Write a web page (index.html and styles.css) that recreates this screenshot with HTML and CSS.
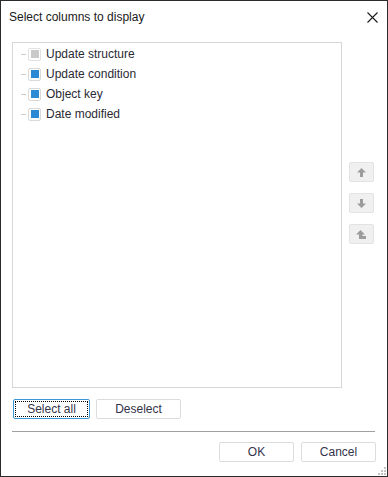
FILE: index.html
```html
<!DOCTYPE html>
<html lang="en">
<head>
    <meta charset="UTF-8">
    <title>Select columns to display</title>
    <link rel="stylesheet" href="styles.css">
</head>
<body>
    <div class="dialog">
        <!-- Title bar -->
        <div class="dialog-title">
            <span class="dialog-title-text">Select columns to display</span>
            <span class="dialog-close">
                <svg width="11" height="11" viewBox="0 0 11 11">
                    <path d="M0.5 0.5 L10.5 10.5 M10.5 0.5 L0.5 10.5" stroke="#1a1a1a" stroke-width="1.1" fill="none"/>
                </svg>
            </span>
        </div>

        <div class="dialog-body">
            <div class="column-list">
                <div class="column-item">
                    <span class="tree-dash"></span>
                    <span class="check disabled"><span class="check-mark"></span></span>
                    <span class="column-label">Update structure</span>
                </div>
                <div class="column-item">
                    <span class="tree-dash"></span>
                    <span class="check"><span class="check-mark"></span></span>
                    <span class="column-label">Update condition</span>
                </div>
                <div class="column-item">
                    <span class="tree-dash"></span>
                    <span class="check"><span class="check-mark"></span></span>
                    <span class="column-label">Object key</span>
                </div>
                <div class="column-item">
                    <span class="tree-dash"></span>
                    <span class="check"><span class="check-mark"></span></span>
                    <span class="column-label">Date modified</span>
                </div>
            </div>

            <div class="move-buttons">
                <span class="move-btn">
                    <svg width="9" height="9" viewBox="0 0 9 9">
                        <path d="M4.5 0 L9 4.5 L6 4.5 L6 9 L3 9 L3 4.5 L0 4.5 Z" fill="#9c9c9c"/>
                    </svg>
                </span>
                <span class="move-btn">
                    <svg width="9" height="9" viewBox="0 0 9 9">
                        <path d="M4.5 9 L9 4.5 L6 4.5 L6 0 L3 0 L3 4.5 L0 4.5 Z" fill="#9c9c9c"/>
                    </svg>
                </span>
                <span class="move-btn">
                    <svg width="11" height="9" viewBox="0 0 11 9">
                        <path d="M4.5 0 L9 4.5 L6.5 4.5 L6.5 6 L10 6 L10 9 L3 9 L3 4.5 L0 4.5 Z" fill="#9c9c9c"/>
                    </svg>
                </span>
            </div>
        </div>

        <div class="select-row">
            <button class="btn btn-select focused">Select all</button>
            <button class="btn btn-deselect">Deselect</button>
        </div>

        <div class="separator"></div>

        <div class="dialog-footer">
            <button class="btn btn-footer">OK</button>
            <button class="btn btn-footer">Cancel</button>
        </div>

        <!-- Resize grip -->
        <div class="resize-grip">
            <svg width="9" height="9" viewBox="0 0 9 9">
                <rect x="7" y="1" width="2" height="2" fill="#c4c4c4"/>
                <rect x="4" y="4" width="2" height="2" fill="#c4c4c4"/>
                <rect x="7" y="4" width="2" height="2" fill="#c4c4c4"/>
                <rect x="1" y="7" width="2" height="2" fill="#c4c4c4"/>
                <rect x="4" y="7" width="2" height="2" fill="#c4c4c4"/>
                <rect x="7" y="7" width="2" height="2" fill="#c4c4c4"/>
            </svg>
        </div>
    </div>
</body>
</html>
```

FILE: styles.css
```css
* {
    margin: 0;
    padding: 0;
    box-sizing: border-box;
}

body {
    font-family: 'Segoe UI', 'Liberation Sans', sans-serif;
    font-size: 12px;
    color: #1e1e1e;
    background: #ffffff;
}

.dialog {
    position: relative;
    width: 388px;
    height: 477px;
    border: 1px solid #2b2b2b;
    background: #ffffff;
    display: flex;
    flex-direction: column;
}

/* Title bar */
.dialog-title {
    height: 30px;
    display: flex;
    align-items: center;
    justify-content: space-between;
    padding: 0 9px 0 8px;
}

.dialog-title-text {
    font-size: 12px;
    color: #1a1a1a;
    margin-top: 1px;
}

.dialog-close {
    display: flex;
    width: 11px;
    height: 11px;
    margin-top: 2px;
}

/* List + move buttons */
.dialog-body {
    display: flex;
    gap: 7px;
    padding: 11px 11px 0 11px;
}

.column-list {
    width: 330px;
    height: 346px;
    border: 1px solid #d6d6d6;
    padding: 1px 0 0 8px;
}

.column-item {
    height: 20px;
    display: flex;
    align-items: center;
}

.tree-dash {
    width: 5px;
    height: 1px;
    background: #cfcfcf;
    margin-right: 2px;
}

.check {
    width: 13px;
    height: 13px;
    border: 1px solid #d9d9d9;
    border-radius: 2px;
    background: #ffffff;
    display: flex;
    align-items: center;
    justify-content: center;
    margin-right: 5px;
}

.check-mark {
    width: 8px;
    height: 8px;
    background: #2a8ad4;
}

.check.disabled {
    border-color: #e2e2e2;
}

.check.disabled .check-mark {
    background: #c9c9c9;
}

.column-label {
    color: #2a2a35;
}

.move-buttons {
    display: flex;
    flex-direction: column;
    gap: 11px;
    padding-top: 120px;
}

.move-btn {
    width: 25px;
    height: 20px;
    background: #f0f0f0;
    border: 1px solid #e3e3e3;
    border-radius: 2px;
    display: flex;
    align-items: center;
    justify-content: center;
}

/* Buttons */
.btn {
    font-family: inherit;
    font-size: 12px;
    color: #33334a;
    height: 20px;
    background: #ffffff;
    border: 1px solid #dcdcdc;
    border-radius: 2px;
    position: relative;
}

.select-row {
    display: flex;
    gap: 6px;
    padding: 11px 0 0 12px;
}

.btn-select {
    width: 77px;
}

.btn-deselect {
    width: 85px;
}

.btn.focused {
    border-color: #3a98d8;
}

.btn.focused::after {
    content: '';
    position: absolute;
    top: 1px;
    left: 1px;
    right: 1px;
    bottom: 1px;
    border: 1px dotted #000000;
}

.separator {
    height: 1px;
    background: #a0a0a0;
    margin: 12px 12px 0 11px;
}

.dialog-footer {
    display: flex;
    justify-content: flex-end;
    gap: 7px;
    padding: 10px 11px 0 0;
}

.btn-footer {
    width: 75px;
}

.resize-grip {
    position: absolute;
    right: 1px;
    bottom: 1px;
    display: flex;
}
```
